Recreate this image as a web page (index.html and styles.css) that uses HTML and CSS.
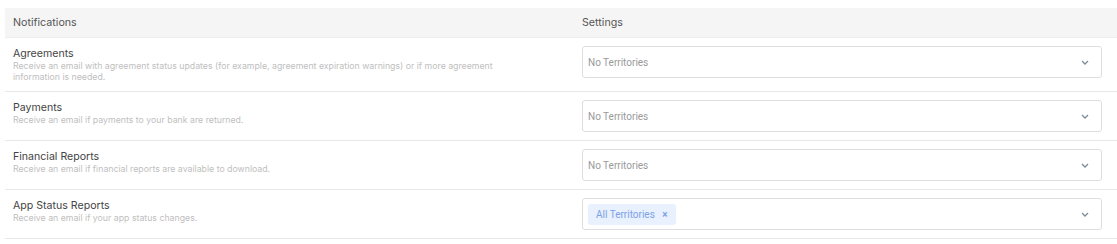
FILE: index.html
```html
<!DOCTYPE html>
<html>
<head>
<meta charset="utf-8">
<link rel="stylesheet" href="styles.css">
</head>
<body>
<div class="table">
  <div class="head">
    <div class="hcell">Notifications</div>
    <div class="hcell hset">Settings</div>
  </div>
  <div class="row">
    <div class="info">
      <div class="title">Agreements</div>
      <div class="desc">Receive an email with agreement status updates (for example, agreement expiration warnings) or if more agreement information is needed.</div>
    </div>
    <div class="setting">
      <div class="select"><span class="ph">No Territories</span><svg class="chev" width="8" height="5" viewBox="0 0 8 5"><path d="M1 1l3 3 3-3" fill="none" stroke="#7d8a99" stroke-width="1.3"/></svg></div>
    </div>
  </div>
  <div class="row">
    <div class="info">
      <div class="title">Payments</div>
      <div class="desc">Receive an email if payments to your bank are returned.</div>
    </div>
    <div class="setting">
      <div class="select"><span class="ph">No Territories</span><svg class="chev" width="8" height="5" viewBox="0 0 8 5"><path d="M1 1l3 3 3-3" fill="none" stroke="#7d8a99" stroke-width="1.3"/></svg></div>
    </div>
  </div>
  <div class="row">
    <div class="info">
      <div class="title">Financial Reports</div>
      <div class="desc">Receive an email if financial reports are available to download.</div>
    </div>
    <div class="setting">
      <div class="select"><span class="ph">No Territories</span><svg class="chev" width="8" height="5" viewBox="0 0 8 5"><path d="M1 1l3 3 3-3" fill="none" stroke="#7d8a99" stroke-width="1.3"/></svg></div>
    </div>
  </div>
  <div class="row">
    <div class="info">
      <div class="title">App Status Reports</div>
      <div class="desc">Receive an email if your app status changes.</div>
    </div>
    <div class="setting">
      <div class="select"><span class="tag">All Territories <span class="x">×</span></span><svg class="chev" width="8" height="5" viewBox="0 0 8 5"><path d="M1 1l3 3 3-3" fill="none" stroke="#7d8a99" stroke-width="1.3"/></svg></div>
    </div>
  </div>
</div>
</body>
</html>
```
FILE: styles.css
```css
html, body {
  margin: 0;
  background: #fff;
}
body {
  padding: 8px 0 0 5px;
  font-family: Inter, "Noto Sans", sans-serif;
}
.table {
  width: 1112px;
}
.head, .row {
  display: grid;
  grid-template-columns: 569px 1fr;
}
.head {
  height: 30px;
  background: #f5f5f5;
  align-items: center;
  border-bottom: 1px solid #ededed;
  box-sizing: border-box;
}
.hcell {
  padding: 0 8px;
  font-size: 10.7px;
  color: #555;
}
.hset {
  padding-left: 8px;
}
.row {
  border-bottom: 1px solid #e8e8e8;
}
.info {
  padding: 9px 8px 8px;
}
.title {
  font-size: 10.6px;
  line-height: 14px;
  color: #444;
}
.desc {
  font-size: 8.75px;
  line-height: 11px;
  color: #c0c0c0;
  max-width: 505px;
}
.setting {
  padding: 8px 15px 8px 8px;
}
.select {
  height: 32px;
  box-sizing: border-box;
  border: 1px solid #dedede;
  border-radius: 3px;
  display: flex;
  align-items: center;
  justify-content: space-between;
  padding: 0 12px 0 5px;
}
.ph {
  font-family: Roboto, "Liberation Sans", sans-serif;
  font-size: 10px;
  color: #9a9a9a;
}
.tag {
  font-family: Roboto, "Liberation Sans", sans-serif;
  font-size: 10px;
  color: #7da0e8;
  background: #e8f1fd;
  border-radius: 3px;
  height: 21px;
  line-height: 21px;
  padding: 0 8px 0 8px;
}
.x {
  margin-left: 5px;
  font-size: 10px;
  font-weight: 700;
}
.chev {
  display: block;
}
```
